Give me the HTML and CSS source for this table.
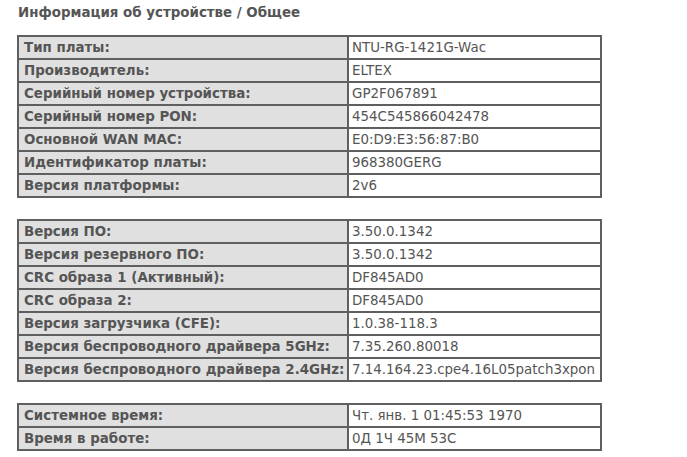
FILE: index.html
```html
<!DOCTYPE html>
<html lang="ru">
<head>
<meta charset="utf-8">
<link rel="stylesheet" href="styles.css">
</head>
<body>
<div class="page">
  <h1 class="title">Информация об устройстве / Общее</h1>
  <table class="info">
    <colgroup><col class="c1"><col class="c2"></colgroup>
    <tr><th>Тип платы:</th><td>NTU-RG-1421G-Wac</td></tr>
    <tr><th>Производитель:</th><td>ELTEX</td></tr>
    <tr><th>Серийный номер устройства:</th><td>GP2F067891</td></tr>
    <tr><th>Серийный номер PON:</th><td>454C545866042478</td></tr>
    <tr><th>Основной WAN MAC:</th><td>E0:D9:E3:56:87:B0</td></tr>
    <tr><th>Идентификатор платы:</th><td>968380GERG</td></tr>
    <tr><th>Версия платформы:</th><td>2v6</td></tr>
  </table>
  <table class="info">
    <colgroup><col class="c1"><col class="c2"></colgroup>
    <tr><th>Версия ПО:</th><td>3.50.0.1342</td></tr>
    <tr><th>Версия резервного ПО:</th><td>3.50.0.1342</td></tr>
    <tr><th>CRC образа 1 (Активный):</th><td>DF845AD0</td></tr>
    <tr><th>CRC образа 2:</th><td>DF845AD0</td></tr>
    <tr><th>Версия загрузчика (CFE):</th><td>1.0.38-118.3</td></tr>
    <tr><th>Версия беспроводного драйвера 5GHz:</th><td>7.35.260.80018</td></tr>
    <tr><th>Версия беспроводного драйвера 2.4GHz:</th><td>7.14.164.23.cpe4.16L05patch3xpon</td></tr>
  </table>
  <table class="info">
    <colgroup><col class="c1"><col class="c2"></colgroup>
    <tr><th>Системное время:</th><td>Чт. янв. 1 01:45:53 1970</td></tr>
    <tr><th>Время в работе:</th><td>0Д 1Ч 45М 53С</td></tr>
  </table>
</div>
</body>
</html>
```
FILE: styles.css
```css
html, body {
  margin: 0;
  padding: 0;
  background: #ffffff;
}
.page {
  padding: 5px 0 0 18px;
  font-family: "DejaVu Sans", sans-serif;
  color: #555555;
}
.title {
  margin: 0 0 14px 0;
  font-size: 13.4px;
  font-weight: bold;
  line-height: 16px;
  color: #555555;
}
.info {
  border-collapse: collapse;
  table-layout: fixed;
  width: 583px;
  margin: 0 0 21px -1px;
  font-size: 13.4px;
}
.info .c1 { width: 330px; }
.info .c2 { width: 253px; }
.info th, .info td {
  border: 2px solid #5f5f5f;
  padding: 3px 4px 3px 5px;
  line-height: 15px;
  text-align: left;
  white-space: nowrap;
  overflow: hidden;
}
.info th {
  background: #e0e0e0;
  font-weight: bold;
  color: #555555;
}
.info td {
  background: #ffffff;
  font-weight: normal;
  color: #555555;
  padding-left: 3px;
}
```
